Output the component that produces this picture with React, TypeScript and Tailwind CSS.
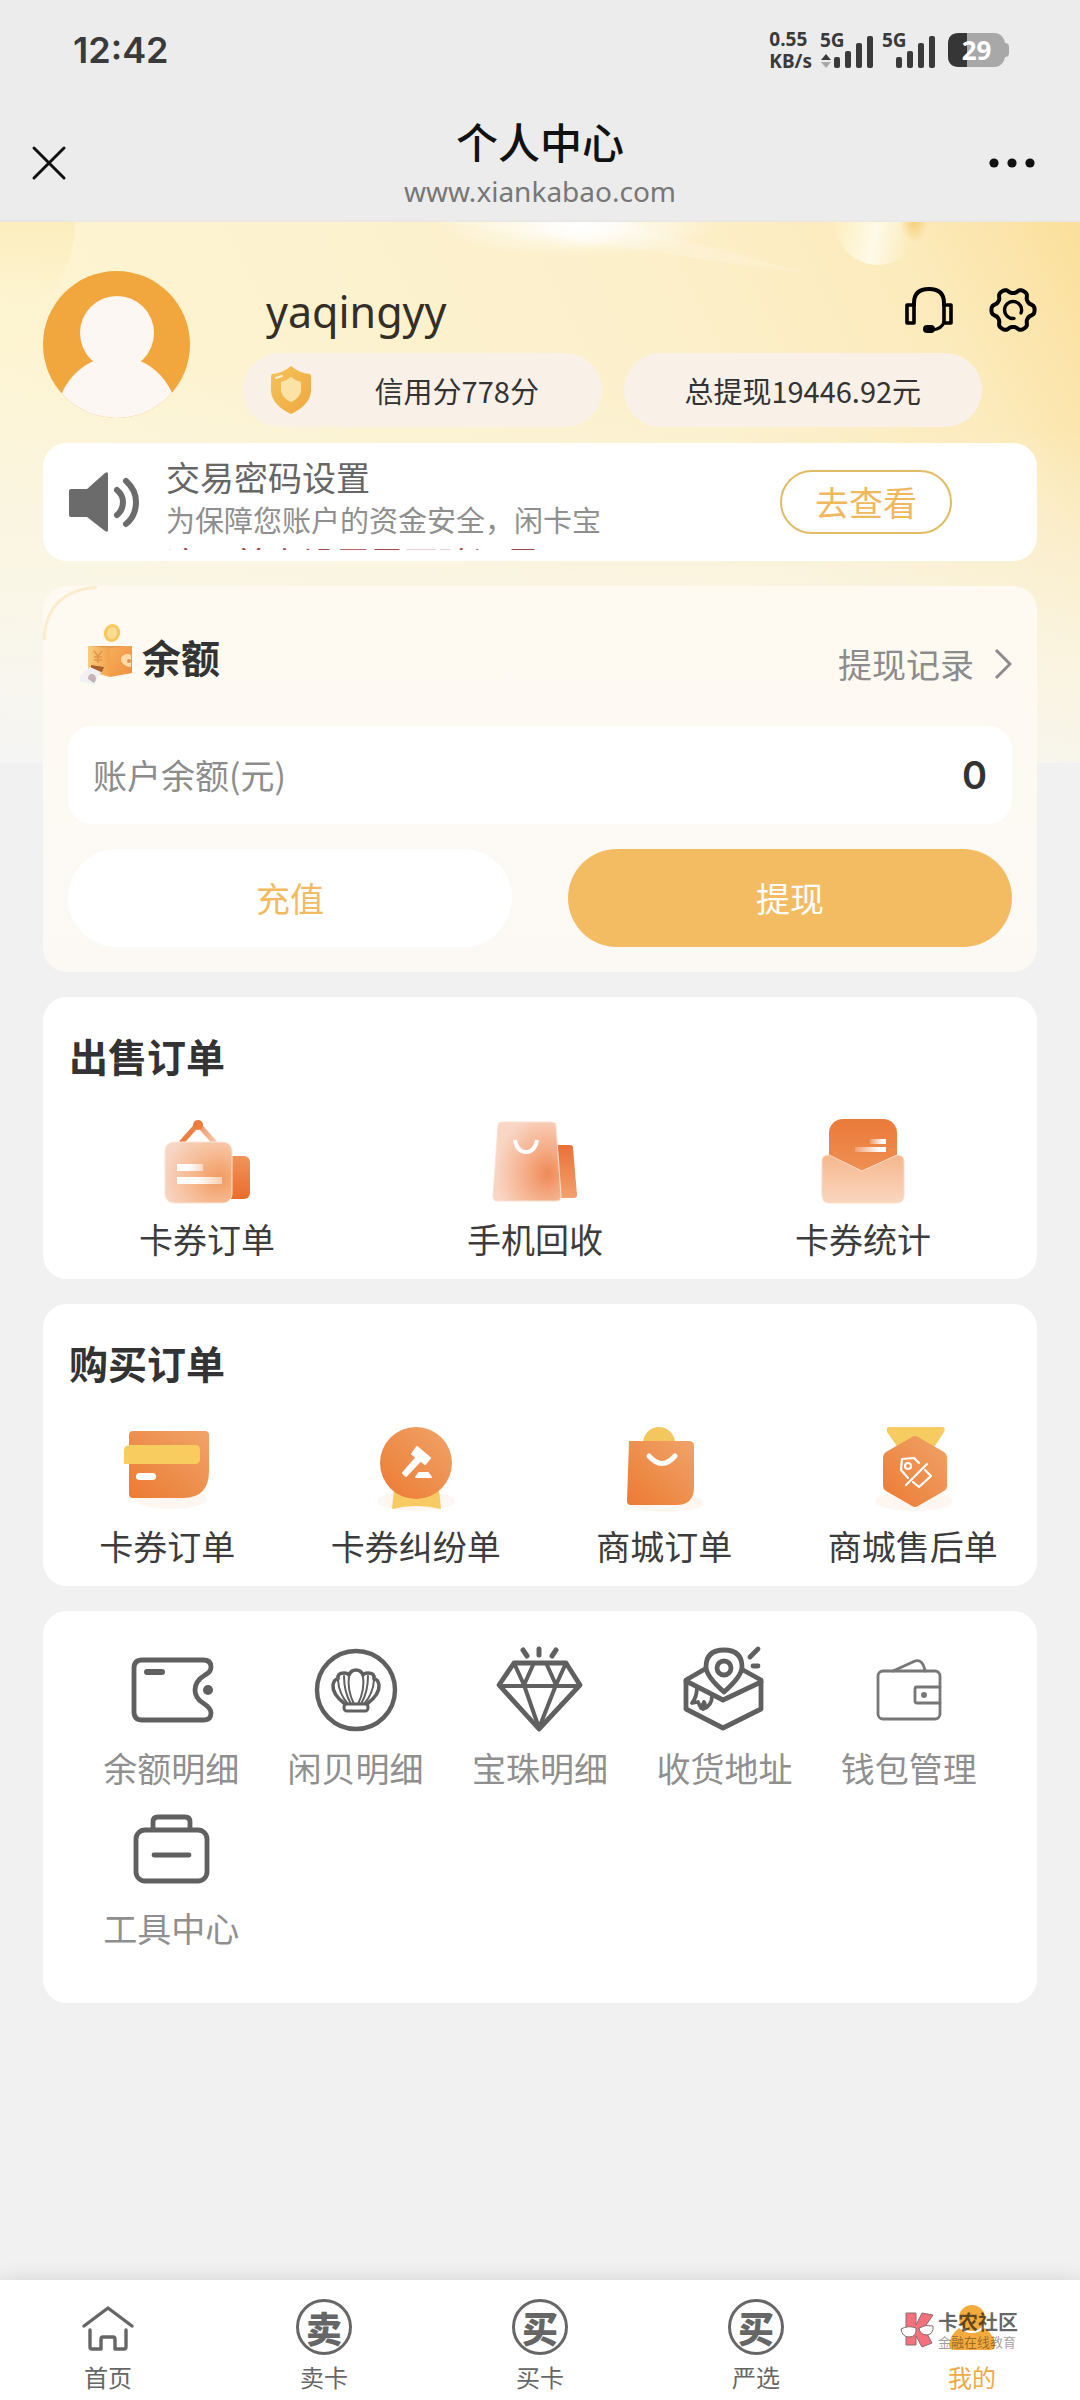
import type { ReactNode } from 'react'

interface Entry {
  label: string
  icon: ReactNode
}

const sellOrders: Entry[] = [
  { label: '卡券订单', icon: <HangTagIcon /> },
  { label: '手机回收', icon: <RecycleBagIcon /> },
  { label: '卡券统计', icon: <EnvelopeIcon /> },
]

const buyOrders: Entry[] = [
  { label: '卡券订单', icon: <CardIcon /> },
  { label: '卡券纠纷单', icon: <GavelIcon /> },
  { label: '商城订单', icon: <ShopBagIcon /> },
  { label: '商城售后单', icon: <MedalIcon /> },
]

const tools: Entry[] = [
  { label: '余额明细', icon: <TicketIcon /> },
  { label: '闲贝明细', icon: <ShellIcon /> },
  { label: '宝珠明细', icon: <DiamondIcon /> },
  { label: '收货地址', icon: <AddressIcon /> },
  { label: '钱包管理', icon: <PurseIcon /> },
  { label: '工具中心', icon: <ToolboxIcon /> },
]

export default function App() {
  return (
    <div className="min-h-screen flex flex-col bg-[#f1f1f1] text-[#333] font-['Noto_Sans_CJK_SC',sans-serif]">
      <StatusBar />
      <NavBar />

      <main className="relative flex-1 px-[43px] pt-[49px] pb-10">
        <HeroBackdrop />
        <div className="relative">
          <Profile />
          <div className="mt-4 flex flex-col gap-[25px]">
            <Notice />
            <Balance />
            <OrderCard title="出售订单" items={sellOrders} columns={3} />
            <OrderCard title="购买订单" items={buyOrders} columns={4} />
            <ToolsCard />
          </div>
        </div>
      </main>

      <TabBar />
    </div>
  )
}

function StatusBar() {
  return (
    <div className="h-[100px] bg-[#ececec] pl-[73px] pr-[71px] flex items-center justify-between text-[#3a3a3a]">
      <span className="font-[Inter,sans-serif] font-semibold text-[36px] leading-[48px]">12:42</span>
      <div className="flex items-center gap-2 font-['Noto_Sans',sans-serif] font-bold">
        <div className="text-[19px] leading-[22px]">
          <div>0.55</div>
          <div>KB/s</div>
        </div>
        <Signal arrows />
        <Signal />
        <div className="relative ml-1 w-[61px] h-[34px]">
          <svg className="w-full h-full" viewBox="0 0 61 34">
            <rect x="52" y="10" width="9" height="14" rx="4" fill="#a8a8a8" />
            <rect width="57" height="34" rx="11" fill="#a8a8a8" />
            <path d="M11 0H19V34H11Q0 34 0 23V11Q0 0 11 0Z" fill="#363636" />
          </svg>
          <span className="absolute inset-0 pr-1 text-center text-[26px] leading-[34px] text-white">29</span>
        </div>
      </div>
    </div>
  )
}

function Signal({ arrows = false }: { arrows?: boolean }) {
  return (
    <svg className="w-[54px] h-[42px] -mt-[6px]" viewBox="0 -6 54 42" fill="#3a3a3a">
      <text x="0" y="15" fontSize="19">5G</text>
      {arrows && (
        <>
          <path d="M6 22L11 28H1Z" />
          <path d="M6 36L11 30H1Z" fill="#a8a8a8" />
        </>
      )}
      <rect x="14" y="25" width="6" height="11" rx="2" />
      <rect x="25" y="19" width="6" height="17" rx="2" />
      <rect x="36" y="11" width="6" height="25" rx="2" />
      <rect x="47" y="4" width="6" height="32" rx="2" />
    </svg>
  )
}

function NavBar() {
  return (
    <header className="h-[122px] bg-[#ececec] border-b-2 border-[#eae8e6] pl-[31px] pr-[45px] grid grid-cols-[46px_1fr_32px] items-center text-[#111]">
      <button aria-label="关闭" className="pt-[6px]">
        <svg className="w-9 h-9" viewBox="0 0 36 36" stroke="currentColor" strokeWidth="3" strokeLinecap="round">
          <path d="M3 3L33 33M33 3L3 33" />
        </svg>
      </button>
      <div className="pt-[14px] text-center">
        <h1 className="text-[42px] leading-[48px] font-medium">个人中心</h1>
        <p className="font-['Noto_Sans',sans-serif] text-[28px] leading-[52px] text-[#777]">www.xiankabao.com</p>
      </div>
      <button aria-label="更多" className="pt-[6px] flex justify-end">
        <svg className="w-[46px] h-9 shrink-0" viewBox="0 0 46 36" fill="currentColor">
          <circle cx="5" cy="18" r="4.6" />
          <circle cx="23" cy="18" r="4.6" />
          <circle cx="41" cy="18" r="4.6" />
        </svg>
      </button>
    </header>
  )
}

function HeroBackdrop() {
  return (
    <svg className="absolute inset-x-0 top-0 w-full h-[541px]" viewBox="0 0 1080 541" preserveAspectRatio="none">
      <defs>
        <linearGradient id="hero-base" x1="0" x2="1" y1="0.25" y2="0">
          <stop offset="0" stopColor="#fdf4d2" />
          <stop offset="0.6" stopColor="#fcf0cb" />
          <stop offset="0.85" stopColor="#fceaba" />
          <stop offset="1" stopColor="#fbdf9b" />
        </linearGradient>
        <linearGradient id="hero-fade" x1="0.15" x2="0" y1="0" y2="1">
          <stop offset="0.25" stopColor="#f6f6f4" stopOpacity="0" />
          <stop offset="0.7" stopColor="#f9f8f1" stopOpacity="0.7" />
          <stop offset="1" stopColor="#f5f5f5" />
        </linearGradient>
        <radialGradient id="hero-flare">
          <stop offset="0" stopColor="#fff" stopOpacity="0.95" />
          <stop offset="1" stopColor="#fff" stopOpacity="0" />
        </radialGradient>
        <linearGradient id="hero-ball" x1="0" x2="1" y1="0.4" y2="0.6">
          <stop offset="0" stopColor="#fdeebc" />
          <stop offset="0.5" stopColor="#fefae8" />
          <stop offset="1" stopColor="#fbe8b2" />
        </linearGradient>
        <radialGradient id="hero-glow">
          <stop offset="0" stopColor="#f5c76c" stopOpacity="0.8" />
          <stop offset="1" stopColor="#f5c76c" stopOpacity="0" />
        </radialGradient>
        <linearGradient id="hero-orb" x1="0" x2="0" y1="0" y2="1">
          <stop offset="0.5" stopColor="#fbe9a8" stopOpacity="0.5" />
          <stop offset="1" stopColor="#fbecb4" stopOpacity="0" />
        </linearGradient>
      </defs>
      <rect width="1080" height="541" fill="url(#hero-base)" />
      <ellipse cx="15" cy="0" rx="60" ry="90" fill="url(#hero-orb)" />
      <path d="M440 0L810 52L620 0Z" fill="#fff" opacity="0.16" />
      <ellipse cx="580" cy="4" rx="140" ry="30" fill="url(#hero-flare)" />
      <ellipse cx="585" cy="0" rx="50" ry="26" fill="url(#hero-flare)" />
      <circle cx="878" cy="0" r="43" fill="url(#hero-ball)" />
      <ellipse cx="914" cy="0" rx="14" ry="20" fill="url(#hero-glow)" />
      <rect width="1080" height="541" fill="url(#hero-fade)" />
    </svg>
  )
}

function Profile() {
  return (
    <section className="flex items-start">
      <svg className="w-[147px] h-[147px] shrink-0" viewBox="0 0 147 147">
        <defs>
          <clipPath id="avatar-clip">
            <circle cx="73.5" cy="73.5" r="73.5" />
          </clipPath>
        </defs>
        <g clipPath="url(#avatar-clip)">
          <rect width="147" height="147" fill="#f1a73d" />
          <circle cx="74" cy="62" r="37" fill="#fcf7f3" />
          <ellipse cx="74" cy="150" rx="61" ry="65" fill="#fcf7f3" />
        </g>
      </svg>
      <div className="flex-1 ml-[53px]">
        <div className="h-[82px] pl-[23px] flex items-center justify-between">
          <h2 className="font-['Noto_Sans',sans-serif] text-[43px] leading-[60px] text-[#332f26]">yaqingyy</h2>
          <div className="pb-1 flex items-center gap-9 text-black">
            <button aria-label="客服"><HeadsetIcon /></button>
            <button aria-label="设置"><GearIcon /></button>
          </div>
        </div>
        <div className="mr-[55px] grid grid-cols-2 gap-[22px] text-[29px] leading-[40px] text-[#333]">
          <div className="h-[74px] rounded-full bg-[#f9f0e8] pl-[27px] flex items-center">
            <ShieldIcon />
            <span className="flex-1 text-center">信用分778分</span>
          </div>
          <div className="h-[74px] rounded-full bg-[#f9f0e8] flex items-center justify-center">
            总提现19446.92元
          </div>
        </div>
      </div>
    </section>
  )
}

function Notice() {
  return (
    <section className="h-[118px] rounded-3xl bg-white pl-[26px] pr-[85px] flex items-center">
      <svg className="w-[72px] h-16 shrink-0" viewBox="0 0 72 64" fill="none" stroke="#6b6b6b" strokeLinecap="round">
        <path d="M2 19H18L36 3Q39 1 39 4V60Q39 63 36 61L18 47H2Q0 47 0 45V21Q0 19 2 19Z" fill="#6b6b6b" stroke="none" />
        <path d="M48 20Q54 25 54 32Q54 40 48 45" strokeWidth="6" />
        <path d="M57 11Q67 20 67 32Q67 46 57 54" strokeWidth="6" />
      </svg>
      <div className="ml-[25px] w-[444px] h-24 overflow-hidden whitespace-nowrap">
        <h3 className="text-[34px] leading-[46px] text-[#666]">交易密码设置</h3>
        <p className="text-[29px] leading-[38px] text-[#8f8f8f]">为保障您账户的资金安全，闲卡宝</p>
        <p className="text-[34px] leading-[50px] text-[#a8434a]">这，首次设置需要验证是否正</p>
      </div>
      <button className="ml-auto w-[172px] h-16 rounded-full border-2 border-[#e2bb67] text-[34px] leading-[40px] text-[#efb85c]">
        去查看
      </button>
    </section>
  )
}

function Balance() {
  return (
    <section className="relative rounded-3xl bg-gradient-to-b from-[#fefaf1] to-[#fcf9f5] px-[25px] pb-[25px]">
      <svg className="absolute left-0 top-0 w-16 h-16" viewBox="0 0 64 64" fill="none">
        <path d="M1 54Q3 5 54 1" stroke="#fcebcd" strokeWidth="3" />
      </svg>
      <div className="h-[140px] pl-3 flex items-center justify-between">
        <div className="flex items-center">
          <CoinBoxIcon />
          <h3 className="text-[39px] leading-[44px] font-bold">余额</h3>
        </div>
        <a href="#records" className="flex items-center gap-5 pt-4 text-[34px] leading-[40px] text-[#8c8c8c]">
          提现记录
          <svg className="w-[18px] h-8" viewBox="0 0 18 32" fill="none" stroke="currentColor" strokeWidth="3">
            <path d="M2 2L16 16L2 30" />
          </svg>
        </a>
      </div>
      <div className="h-[98px] rounded-3xl bg-white px-[25px] flex items-center justify-between">
        <span className="text-[34px] leading-[40px] text-[#8c8c8c]">账户余额(元)</span>
        <span className="font-[Inter,sans-serif] font-semibold text-[38px] leading-[44px]">0</span>
      </div>
      <div className="mt-[25px] grid grid-cols-2 gap-14 text-[34px] leading-[40px]">
        <button className="h-[98px] rounded-full bg-white text-[#f2bb61]">充值</button>
        <button className="h-[98px] rounded-full bg-[#f3bc62] text-white">提现</button>
      </div>
    </section>
  )
}

function OrderCard({ title, items, columns }: { title: string; items: Entry[]; columns: 3 | 4 }) {
  return (
    <section className="rounded-3xl bg-white pt-9 pb-5">
      <h3 className="pl-[26px] text-[39px] leading-[44px] font-bold">{title}</h3>
      <div className={`mt-[37px] grid ${columns === 3 ? 'grid-cols-3 mr-[10px]' : 'grid-cols-4'}`}>
        {items.map(item => (
          <a key={item.label} href="#orders" className="flex flex-col items-center gap-[9px] text-[34px] leading-[40px] text-[#3c3c3c]">
            {item.icon}
            <span>{item.label}</span>
          </a>
        ))}
      </div>
    </section>
  )
}

function ToolsCard() {
  return (
    <section className="rounded-3xl bg-white px-9 pt-[31px] pb-[55px]">
      <div className="grid grid-cols-5 gap-y-[14px]">
        {tools.map(item => (
          <a key={item.label} href="#tools" className="flex flex-col items-center gap-[10px] text-[34px] leading-[40px] text-[#8f8f8f]">
            {item.icon}
            <span>{item.label}</span>
          </a>
        ))}
      </div>
    </section>
  )
}

function TabBar() {
  return (
    <nav className="sticky bottom-0 h-[120px] bg-white grid grid-cols-5 text-[24px] leading-[32px] text-[#666] shadow-[0_0_20px_rgba(0,0,0,0.12)]">
      <Tab label="首页">
        <svg className="w-14 h-14" viewBox="0 0 56 56" fill="none" stroke="currentColor" strokeWidth="3.4" strokeLinecap="round" strokeLinejoin="round">
          <path d="M4 27L28 9L52 27" />
          <path d="M10 31V48Q10 50 12 50H21V40Q21 38 23 38H33Q35 38 35 40V50H44Q46 50 46 48V31" />
        </svg>
      </Tab>
      <Tab label="卖卡"><RoundChar char="卖" /></Tab>
      <Tab label="买卡"><RoundChar char="买" /></Tab>
      <Tab label="严选"><RoundChar char="买" /></Tab>
      <Tab label="我的" active>
        <svg className="w-14 h-14" viewBox="0 0 56 56" fill="#f3ab3f">
          <circle cx="28" cy="19" r="13" />
          <path d="M15 29Q21 34 28 34Q35 34 41 29Q50 36 51 46Q51 51 46 51H10Q5 51 5 46Q6 36 15 29Z" />
        </svg>
        <Watermark />
      </Tab>
    </nav>
  )
}

function Tab({ label, active = false, children }: { label: string; active?: boolean; children: ReactNode }) {
  return (
    <a href="#tab" className={`relative pt-[19px] flex flex-col items-center gap-[6px] ${active ? 'text-[#ebaa45]' : ''}`}>
      {children}
      <span>{label}</span>
    </a>
  )
}

function RoundChar({ char }: { char: string }) {
  return (
    <span className="w-14 h-14 rounded-full border-[3px] border-[#666] flex items-center justify-center text-[36px] leading-[40px] font-black">
      {char}
    </span>
  )
}

function Watermark() {
  return (
    <div className="absolute left-9 top-[30px] flex items-center gap-1 whitespace-nowrap text-black/60">
      <svg className="w-[34px] h-9" viewBox="0 0 34 36" stroke="#8b6a6c" strokeWidth="1">
        <path d="M6 1H16V13L22 1L33 3L24 16L32 31L22 35L16 24V33H6Z" fill="#f4707c" />
        <path d="M1 17Q8 13 16 16Q17 25 9 25Q2 25 1 17Z" fill="#fff" />
        <path d="M19 16Q26 12 33 14Q34 22 27 23Q20 23 19 16Z" fill="#fff" />
      </svg>
      <div>
        <div className="text-[20px] leading-[24px] font-bold">卡农社区</div>
        <div className="text-[13px] leading-[16px] text-black/40">金融在线教育</div>
      </div>
    </div>
  )
}

/* ---------- profile icons ---------- */

function HeadsetIcon() {
  return (
    <svg className="w-12 h-12" viewBox="0 0 48 48" fill="none" stroke="currentColor" strokeWidth="4">
      <path d="M9 20V17Q9 3 24 3Q39 3 39 17V20" />
      <path d="M2 19H9V37H2ZM39 19H46V37H39Z" strokeWidth="3.6" strokeLinejoin="round" />
      <path d="M39 36Q37 43 27 44" strokeWidth="3" />
      <rect x="18" y="39" width="12" height="8" rx="4" fill="currentColor" stroke="none" />
    </svg>
  )
}

function GearIcon() {
  const points = Array.from({ length: 90 }, (_, i) => {
    const a = (i / 90) * Math.PI * 2
    // flattened cosine gives broad teeth with narrow notches
    const wave = Math.tanh(1.6 * Math.cos(6 * a) + 0.2)
    const r = 19.2 + 2.5 * wave
    return `${24 + r * Math.cos(a)},${24 + r * Math.sin(a)}`
  }).join(' ')
  return (
    <svg className="w-12 h-12" viewBox="0 0 48 48" fill="none" stroke="currentColor" strokeWidth="4" strokeLinejoin="round" strokeLinecap="round">
      <polygon points={points} />
      <path d="M32 27A8.5 8.5 0 1 0 25 32.4" strokeWidth="3.4" />
    </svg>
  )
}

function ShieldIcon() {
  return (
    <svg className="w-[42px] h-[50px]" viewBox="0 0 42 50">
      <defs>
        <linearGradient id="shield" x1="0" x2="1" y1="0" y2="1">
          <stop offset="0" stopColor="#f4c35a" />
          <stop offset="1" stopColor="#efa83f" />
        </linearGradient>
      </defs>
      <path d="M21 1Q29 8 40 9Q41 10 41 12V26Q40 40 21 49Q2 40 1 26V12Q1 10 2 9Q13 8 21 1Z" fill="url(#shield)" />
      <path d="M21 12Q26 16 31 17V26Q30 33 21 37Q12 33 11 26V17Q16 16 21 12Z" fill="#fae3a4" />
      <path d="M6 13L12 11" stroke="#fdf1cf" strokeWidth="2" strokeLinecap="round" />
    </svg>
  )
}

function CoinBoxIcon() {
  return (
    <svg className="w-[62px] h-[66px]" viewBox="0 0 62 66">
      <defs>
        <linearGradient id="coinbox" x1="0" x2="1" y1="0" y2="1">
          <stop offset="0" stopColor="#f6ae5c" />
          <stop offset="1" stopColor="#ef8f3c" />
        </linearGradient>
        <linearGradient id="coinbox-left" x1="0" x2="1" y1="0" y2="0">
          <stop offset="0" stopColor="#f9cc80" />
          <stop offset="1" stopColor="#f3a24c" />
        </linearGradient>
      </defs>
      <ellipse cx="32" cy="10" rx="8" ry="9" fill="#f8c75e" transform="rotate(20 32 10)" />
      <ellipse cx="32" cy="10" rx="5" ry="6" fill="#fbdc92" transform="rotate(20 32 10)" />
      <path d="M8 23L30 24V54L8 48Z" fill="url(#coinbox-left)" />
      <path d="M30 24L52 23V50L30 54Z" fill="url(#coinbox)" />
      <path d="M8 23H52L30 25Z" fill="#e39a4e" />
      <path d="M14 28L18 33L22 28M18 33V40M14 34H22M14 37H22" stroke="#e39447" strokeWidth="1.5" fill="none" />
      <path d="M41 35Q45 29 51 32V44Q45 44 41 38Z" fill="#fcdcaa" />
      <circle cx="49" cy="38" r="2" fill="#e0914a" />
      <path d="M11 42L24 44L22 49L11 48Z" fill="#a9602b" />
      <path d="M-4 57L10 44L21 49L14 62Z" fill="#f1f0f2" />
      <path d="M8 56Q8 51 12 51Q16 51 16 57L14 60Z" fill="#c4b4ba" />
    </svg>
  )
}

/* ---------- order icons ---------- */

function HangTagIcon() {
  return (
    <svg className="w-24 h-24" viewBox="0 0 96 96">
      <defs>
        <linearGradient id="tag-back" x1="0" x2="0" y1="0" y2="1">
          <stop offset="0" stopColor="#f0945a" />
          <stop offset="1" stopColor="#ea6c2b" />
        </linearGradient>
        <linearGradient id="tag-hook" x1="0" x2="1" y1="0" y2="0">
          <stop offset="0.3" stopColor="#ec7f42" />
          <stop offset="1" stopColor="#f8c6a8" />
        </linearGradient>
        <radialGradient id="tag-front" cx="0.8" cy="0.6" r="0.85">
          <stop offset="0" stopColor="#f29a5e" />
          <stop offset="0.5" stopColor="#f6bb94" />
          <stop offset="1" stopColor="#f7d6c5" />
        </radialGradient>
        <linearGradient id="tag-bar" x1="0" x2="1" y1="0" y2="0">
          <stop offset="0.4" stopColor="#fff" />
          <stop offset="1" stopColor="#fff" stopOpacity="0.5" />
        </linearGradient>
      </defs>
      <path d="M22 29L39 10L56 29" fill="none" stroke="url(#tag-hook)" strokeWidth="5" strokeLinejoin="round" />
      <circle cx="39" cy="11" r="5" fill="#ec7c3e" />
      <rect x="60" y="42" width="31" height="43" rx="6" fill="url(#tag-back)" />
      <rect x="6" y="28" width="67" height="61" rx="9" fill="url(#tag-front)" stroke="#fbe3d5" strokeWidth="1" />
      <rect x="18" y="50" width="26" height="7" fill="url(#tag-bar)" />
      <rect x="18" y="63" width="45" height="7" fill="url(#tag-bar)" />
    </svg>
  )
}

function RecycleBagIcon() {
  return (
    <svg className="w-24 h-24" viewBox="0 0 96 96">
      <defs>
        <radialGradient id="bag-front" cx="0.8" cy="0.65" r="0.75">
          <stop offset="0" stopColor="#ef8a58" />
          <stop offset="0.4" stopColor="#f4ab85" />
          <stop offset="1" stopColor="#f9d5c3" />
        </radialGradient>
        <linearGradient id="bag-back" x1="0" x2="0" y1="0" y2="1">
          <stop offset="0" stopColor="#ea7138" />
          <stop offset="1" stopColor="#f2a16e" />
        </linearGradient>
      </defs>
      <path d="M66 31H83Q86 31 86 34L90 81Q90 84 87 84H66Z" fill="url(#bag-back)" />
      <path d="M15 8H65Q69 8 69 12L74 82Q74 87 70 87H10Q6 87 6 82L11 12Q11 8 15 8Z" fill="url(#bag-front)" stroke="#fbe0d2" strokeWidth="1" />
      <path d="M28 26Q30 38 39 38Q48 38 50 26" fill="none" stroke="#fff" strokeWidth="4" />
    </svg>
  )
}

function EnvelopeIcon() {
  return (
    <svg className="w-24 h-24" viewBox="0 0 96 96">
      <defs>
        <linearGradient id="env-back" x1="0" x2="0" y1="0" y2="1">
          <stop offset="0" stopColor="#ea7a3a" />
          <stop offset="1" stopColor="#f0965a" />
        </linearGradient>
        <linearGradient id="env-front" x1="0" x2="0" y1="0" y2="1">
          <stop offset="0" stopColor="#f5b78d" />
          <stop offset="1" stopColor="#fad6bf" />
        </linearGradient>
        <linearGradient id="env-bar" x1="0" x2="1" y1="0" y2="0">
          <stop offset="0" stopColor="#fff" stopOpacity="0.2" />
          <stop offset="0.8" stopColor="#fff" />
        </linearGradient>
      </defs>
      <rect x="14" y="5" width="68" height="68" rx="14" fill="url(#env-back)" />
      <rect x="55" y="25" width="16" height="5" fill="url(#env-bar)" />
      <rect x="40" y="33" width="31" height="5" fill="url(#env-bar)" />
      <path d="M14 41L47 57L82 41Q89 41 89 48V81Q89 89 81 89H15Q7 89 7 81V47Q7 41 14 41Z" fill="url(#env-front)" stroke="#fbdcc8" strokeWidth="1" />
    </svg>
  )
}

function OrangeGradient({ id }: { id: string }) {
  return (
    <linearGradient id={id} x1="1" x2="0" y1="0" y2="1">
      <stop offset="0" stopColor="#f0a469" />
      <stop offset="1" stopColor="#ec7a33" />
    </linearGradient>
  )
}

function CardIcon() {
  return (
    <svg className="w-24 h-24" viewBox="0 0 96 96">
      <defs><OrangeGradient id="card" /></defs>
      <ellipse cx="52" cy="78" rx="36" ry="10" fill="#fef6f1" />
      <path d="M14 10H86Q90 10 90 14V50Q90 77 64 77H14Q10 77 10 73V14Q10 10 14 10Z" fill="url(#card)" />
      <path d="M11 24H76Q81 24 81 29V38Q81 43 76 43H5V30Q5 24 11 24Z" fill="#f8cc5f" />
      <rect x="17" y="52" width="20" height="7" rx="3.5" fill="#fff" />
    </svg>
  )
}

function GavelIcon() {
  return (
    <svg className="w-24 h-24" viewBox="0 0 96 96">
      <defs><OrangeGradient id="gavel" /></defs>
      <ellipse cx="48" cy="80" rx="39" ry="10" fill="#fef6f1" />
      <path d="M26 68H71L73 88Q48 82 24 88Z" fill="#f8cb62" />
      <circle cx="48" cy="42" r="36" fill="url(#gavel)" />
      <g fill="#fff" stroke="#fff" strokeWidth="2" strokeLinejoin="round">
        <path d="M49 26L62 37L57 43L44 33Z" />
        <path d="M53 39L38 55L35 52L49 36Z" />
        <path d="M51 52H60L63 56H48Z" />
      </g>
    </svg>
  )
}

function ShopBagIcon() {
  return (
    <svg className="w-24 h-24" viewBox="0 0 96 96">
      <defs><OrangeGradient id="shop-bag" /></defs>
      <ellipse cx="50" cy="82" rx="38" ry="9" fill="#fef6f1" />
      <circle cx="43" cy="22" r="16" fill="#f4c65e" />
      <path d="M13 20H73Q78 20 78 25V66Q78 84 60 84H15Q11 84 11 80Z" fill="url(#shop-bag)" />
      <path d="M33 35Q46 50 59 35" fill="none" stroke="#fff" strokeWidth="5" strokeLinecap="round" />
    </svg>
  )
}

function MedalIcon() {
  return (
    <svg className="w-24 h-24" viewBox="0 0 96 96">
      <defs><OrangeGradient id="medal" /></defs>
      <ellipse cx="49" cy="80" rx="39" ry="10" fill="#fef6f1" />
      <path d="M24 6H77Q81 6 79 11L68 28H34L22 11Q21 6 24 6Z" fill="#f6cb5f" />
      <path d="M47 16Q50 14 53 16L79 31Q82 33 82 36V65Q82 68 79 70L53 85Q50 87 47 85L21 70Q18 68 18 65V36Q18 33 21 31Z" fill="url(#medal)" />
      <g fill="none" stroke="#fff" strokeWidth="2.2" strokeLinejoin="round" strokeLinecap="round">
        <path d="M43 57L36 49L37 38L49 37L54 42" />
        <circle cx="43" cy="45" r="3" />
        <path d="M62 43L41 64" />
        <path d="M60 49L66 55L54 66L48 61" />
      </g>
    </svg>
  )
}

/* ---------- tool icons ---------- */

function LineIcon({ children }: { children: ReactNode }) {
  return (
    <svg className="w-24 h-24" viewBox="0 0 96 96" fill="none" stroke="#606060" strokeWidth="4.8" strokeLinecap="round" strokeLinejoin="round">
      {children}
    </svg>
  )
}

function TicketIcon() {
  return (
    <LineIcon>
      <path d="M19 18H80Q88 18 88 25Q88 30 82 33Q72 39 72 48Q72 56 80 61Q88 66 88 71Q88 78 81 78H19Q11 78 11 70V26Q11 18 19 18Z" />
      <path d="M24 30H39" strokeWidth="6" />
      <circle cx="85" cy="48" r="5" fill="#606060" stroke="none" />
    </LineIcon>
  )
}

function ShellIcon() {
  return (
    <LineIcon>
      <circle cx="48" cy="48" r="39" strokeWidth="4.4" />
      <path
        d="M37 62Q24 52 25 43Q26 37 30 37Q29 31 36 31Q40 31 41 33Q43 28 48 28Q53 28 55 33Q56 31 60 31Q67 31 66 37Q70 37 71 43Q72 52 59 62"
        strokeWidth="3.6"
      />
      <path d="M30 38Q31 52 40 62M36 34Q36 50 43 62M41 34Q39 48 46 62M66 38Q65 52 56 62M60 34Q60 50 53 62M55 34Q57 48 50 62" strokeWidth="2" />
      <rect x="36" y="62" width="24" height="7" rx="3" strokeWidth="3" fill="#fff" />
    </LineIcon>
  )
}

function DiamondIcon() {
  return (
    <LineIcon>
      <path d="M22 21H74L88 43L47 87L7 43Z" />
      <path d="M8 44H87M22 21L32 43L41 23M55 23L64 43L74 21M32 43L47 86L64 43" strokeWidth="4" />
      <path d="M47 7V13M31 8L35 14M64 8L60 14" strokeWidth="5" />
    </LineIcon>
  )
}

function AddressIcon() {
  return (
    <LineIcon>
      <path d="M29 27L10 38V67L47 86L85 67V38L67 28" />
      <path d="M10 39L47 58L85 40" />
      <path d="M48 50Q30 34 30 25Q30 8 48 8Q66 8 66 25Q66 34 48 50Z" fill="#fff" />
      <circle cx="48" cy="26" r="7" />
      <path d="M21 45Q21 55 16 61L22 60L25 66L28 60Q30 62 27 67Q36 64 36 54" strokeWidth="3.8" />
      <path d="M82 7L74 15M77 24H82" />
    </LineIcon>
  )
}

function PurseIcon() {
  return (
    <LineIcon>
      <g stroke="#777" strokeWidth="2.8">
        <rect x="17" y="29" width="62" height="48" rx="5" />
        <path d="M79 45H56Q54 45 54 47V59Q54 61 56 61H79" />
        <path d="M32 29L54 19Q62 17 64 29" />
        <circle cx="63" cy="53" r="3" fill="#777" stroke="none" />
      </g>
    </LineIcon>
  )
}

function ToolboxIcon() {
  return (
    <LineIcon>
      <rect x="13" y="28" width="71" height="51" rx="9" />
      <path d="M30 27V20Q30 15 35 15H62Q67 15 67 20V27" />
      <path d="M31 53H66" />
    </LineIcon>
  )
}
